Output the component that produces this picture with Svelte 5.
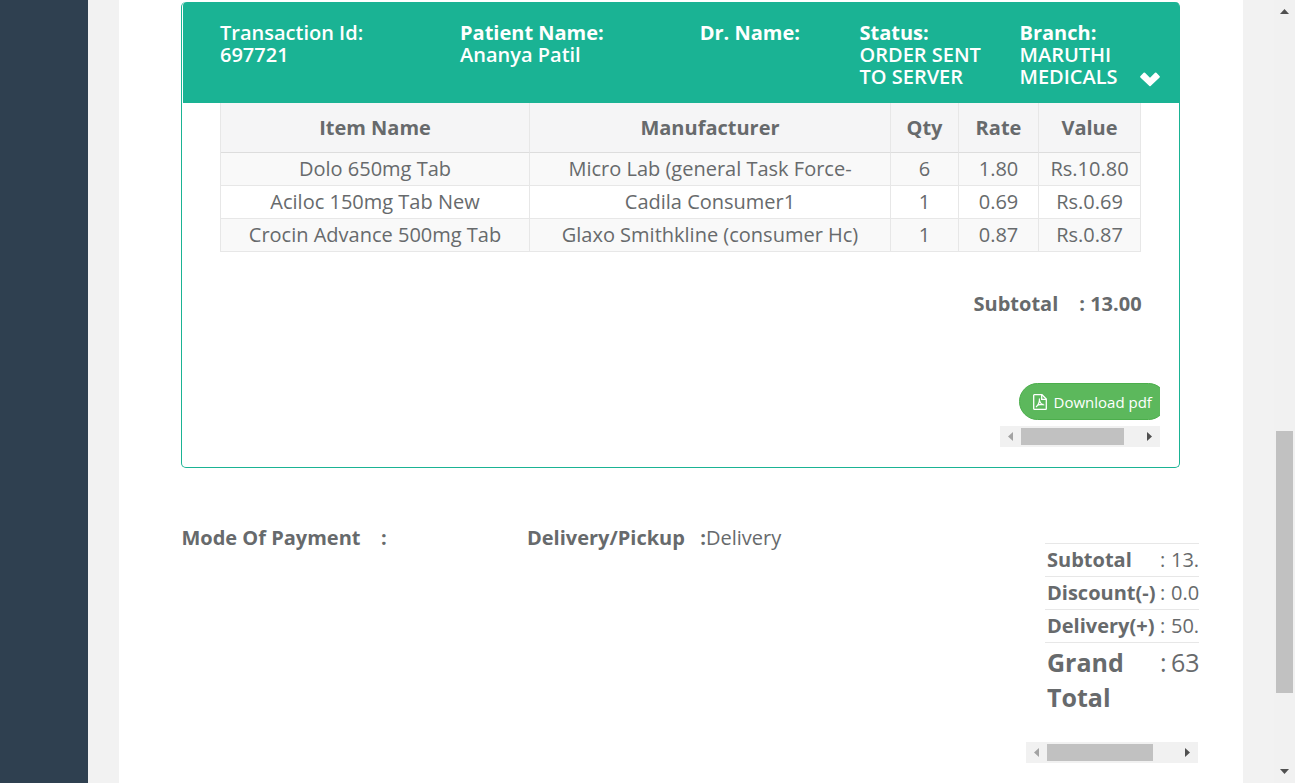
<script>
  const details = [
    { label: 'Transaction Id:', value: '697721', light: true },
    { label: 'Patient Name:', value: 'Ananya Patil' },
    { label: 'Dr. Name:', value: '' },
    { label: 'Status:', value: 'ORDER SENT TO SERVER' },
    { label: 'Branch:', value: 'MARUTHI MEDICALS' }
  ];
  const items = [
    ['Dolo 650mg Tab', 'Micro Lab (general Task Force-', '6', '1.80', 'Rs.10.80'],
    ['Aciloc 150mg Tab New', 'Cadila Consumer1', '1', '0.69', 'Rs.0.69'],
    ['Crocin Advance 500mg Tab', 'Glaxo Smithkline (consumer Hc)', '1', '0.87', 'Rs.0.87']
  ];
  const totals = [
    ['Subtotal', '13.00'],
    ['Discount(-)', '0.00'],
    ['Delivery(+)', '50.00']
  ];
</script>

{#snippet hbar(thumb)}
  <div class="hbar">
    <svg class="arrow" width="21" height="21" viewBox="0 0 21 21"><path d="M13 6v9l-5-4.5z" fill="#a3a3a3" /></svg>
    <div class="thumb" style="width: {thumb}px"></div>
    <svg class="arrow end" width="21" height="21" viewBox="0 0 21 21"><path d="M8 6v9l5-4.5z" fill="#505050" /></svg>
  </div>
{/snippet}

<div class="page">
  <nav class="side"></nav>
  <div class="wrapper">
    <main class="sheet">
      <section class="panel">
        <header class="head">
          {#each details as d}
            <div class="cell"><b class:light={d.light}>{d.label}</b><span>{d.value}</span></div>
          {/each}
          <svg class="chevron" width="20" height="16" viewBox="0 0 20 16"><path d="M0.3 5.3 3.6 1.7Q4.3 1.1 5 1.7L10 6.7 15 1.7Q15.7 1.1 16.4 1.7L19.7 5.3Q20.1 5.9 19.6 6.5L10.6 15.1Q10 15.6 9.4 15.1L0.4 6.5Q-.1 5.9 .3 5.3z" fill="#fff" /></svg>
        </header>
        <div class="items">
          <div class="row th"><div>Item Name</div><div>Manufacturer</div><div>Qty</div><div>Rate</div><div>Value</div></div>
          {#each items as item}
            <div class="row">{#each item as v}<div>{v}</div>{/each}</div>
          {/each}
        </div>
        <div class="sub"><span>Subtotal</span><span>: 13.00</span></div>
        <div class="download">
          <div class="clip">
            <button>
              <svg width="14" height="16" viewBox="0 0 14 16" fill="none" stroke="#fff" stroke-width="1.3"><path d="M1.300.7H9L13.300 5v9.700q0 .6-.6.6H1.300q-.6 0-.6-.6V1.300q0-.6.6-.6z" /><path d="M8.700 1v4.300h4.300" /><path d="M3 13C4.800 11.500 6.600 8.500 6.500 4.500M6.600 6.500C7 8.800 8.500 10.500 11.300 11M4.500 11.300Q7.300 10.100 10.500 10.400" stroke-width="1.200" /></svg>
              <span>Download pdf</span>
            </button>
          </div>
          {@render hbar(103)}
        </div>
      </section>
      <section class="summary">
        <div class="mode"><b>Mode Of Payment</b><b>:</b></div>
        <div class="pickup"><b>Delivery/Pickup</b><b>:</b><span>Delivery</span></div>
        <div class="totals">
          <div class="lines">
            {#each totals as [label, value]}
              <div class="line"><b>{label}</b><span>:</span><span>{value}</span></div>
            {/each}
            <div class="line grand"><b>Grand Total</b><span>:</span><span>63</span></div>
          </div>
          {@render hbar(106)}
        </div>
      </section>
    </main>
  </div>
  <div class="vbar">
    <svg width="21" height="21" viewBox="0 0 21 21"><path d="M6 14h9l-4.500-5z" fill="#505050" /></svg>
    <div class="vthumb"></div>
    <svg class="down" width="21" height="21" viewBox="0 0 21 21"><path d="M6 7h9l-4.500 5z" fill="#505050" /></svg>
  </div>
</div>

<style>
  :global(body) { margin: 0; overflow: hidden; }
  .page { display: flex; width: 1295px; height: 783px; overflow: hidden; background: #f3f3f3; font: 400 20px/22px "Open Sans", sans-serif; color: #676a6c; }
  .page :global(*) { box-sizing: border-box; }
  b { font-weight: 700; }
  .side { width: 88px; background: #2f4050; }
  .wrapper { flex: 1; padding: 0 31px; background: #f2f2f2; }
  .sheet { height: 783px; background: #fff; padding: 2px 44px 0 62px; }
  .panel { width: 999px; height: 466px; border: 1px solid #1ab394; border-top: 0; border-radius: 5px; padding-left: 1px; }
  .head { height: 101px; background: #1ab394; color: #fff; border-radius: 4px 4px 0 0; display: grid; grid-template-columns: 240px 239.700px 159.800px 160px 120px 20px; padding: 20px 0 0 37px; font-weight: 600; }
  .cell { display: flex; flex-direction: column; padding-right: 20px; }
  .cell:nth-child(5) { padding-right: 0; }
  .cell b.light { font-weight: 600; }
  .chevron { margin: 49px 0 0 0.500px; }
  .items { margin-left: 37px; width: 921px; }
  .row { display: grid; grid-template-columns: 309px 361px 68px 80px 102px; height: 33px; border-left: 1px solid #e7e7e7; background: #f9f9f9; text-align: center; }
  .row:nth-child(odd) { background: #fff; }
  .row div { border-right: 1px solid #e7e7e7; border-bottom: 1px solid #e7e7e7; line-height: 32px; white-space: nowrap; }
  .row.th { height: 50px; background: #f5f5f6; font-weight: 700; }
  .row.th div { line-height: 49px; border-bottom-color: #ddd; }
  .sub { display: flex; justify-content: flex-end; gap: 21px; margin: 41px 37.400px 0 0; font-weight: 700; }
  .download { width: 160px; margin: 68px 0 0 817px; }
  .clip { overflow: hidden; padding-left: 19px; height: 43px; }
  button { display: flex; align-items: center; gap: 7px; width: 148px; height: 37px; padding: 0 0 0 12.500px; border: 1px solid #4cae4c; border-radius: 19px; background: #5cb85c; color: #fff; font: 400 15px/22px "Open Sans", sans-serif; white-space: nowrap; }
  button svg { flex: none; }
  .hbar { display: flex; align-items: center; height: 21px; background: #f1f1f1; }
  .hbar .thumb { height: 17px; background: #c1c1c1; }
  .arrow { display: block; flex: none; }
  .arrow.end { margin-left: auto; }
  .summary { display: grid; grid-template-columns: 346px 499px 173px; padding-top: 59px; }
  .mode, .pickup { display: flex; }
  .mode { gap: 20.500px; padding-left: 0.400px; }
  .pickup b:first-child { width: 173.300px; }
  .totals { padding-top: 16px; }
  .lines { width: 154px; height: 199px; margin-left: 19px; overflow: hidden; }
  .line { display: grid; grid-template-columns: 113px 11px 80px; height: 33px; padding: 5px 0 0 2px; border-top: 1px solid #e7e7e7; white-space: nowrap; }
  .grand { height: 90px; padding-top: 2px; font-size: 25px; line-height: 35px; }
  .grand b { white-space: normal; }
  .totals .hbar { width: 172px; }
  .vbar { display: flex; flex-direction: column; width: 21px; background: #f1f1f1; }
  .vthumb { width: 17px; height: 262px; margin: 410px 0 0 2px; background: #c1c1c1; }
  .down { margin-top: auto; }
</style>
